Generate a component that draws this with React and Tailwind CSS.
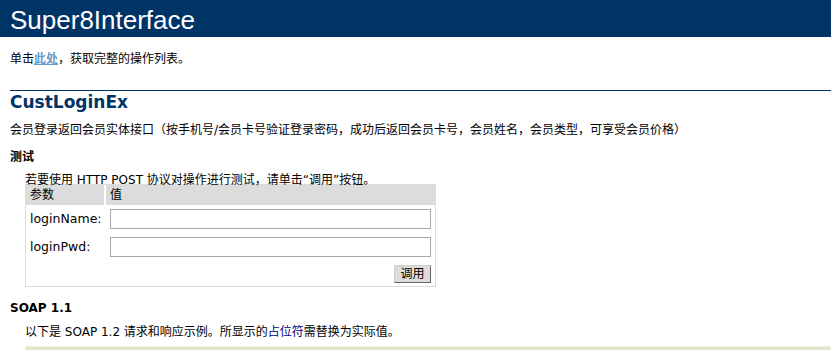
export default function App() {
  return (
    <div className="min-h-screen bg-white text-black text-[12px] leading-[16px] font-['DejaVu_Sans','Noto_Sans_CJK_SC',sans-serif]">
      {/* heading1 */}
      <div className="h-[37px] bg-[#003366] pl-[10px] pt-[7px] text-[26px] leading-[26px] text-white font-['Liberation_Sans','Noto_Sans_CJK_SC',sans-serif]">
        Super8Interface
      </div>

      <div className="ml-[10px]">
        <p className="mt-[14px]">
          单击
          <a href="#" className="font-bold text-[#6699cc] underline">
            此处
          </a>
          ，获取完整的操作列表。
        </p>

        <h2 className="mt-[23px] border-t border-[#003366] pt-[1px] text-[17px] leading-[20px] font-bold text-[#003366]">
          CustLoginEx
        </h2>
        <p className="mt-[10px]">
          会员登录返回会员实体接口（按手机号/会员卡号验证登录密码，成功后返回会员卡号，会员姓名，会员类型，可享受会员价格）
        </p>

        <h3 className="mt-[11px] font-bold">测试</h3>
        <div className="ml-[15px]">
          <p className="mt-[7px]">若要使用 HTTP POST 协议对操作进行测试，请单击“调用”按钮。</p>

          {/* test form */}
          <form className="-mt-[4px] w-[411px] border border-[#dcdcdc]" onSubmit={(e) => e.preventDefault()}>
            <div className="flex h-[20px] bg-[#dcdcdc] leading-[20px]">
              <div className="w-[80px] border-r-2 border-white pl-[4px]">参数</div>
              <div className="flex-1 pl-[4px]">值</div>
            </div>
            <div className="flex h-[28px] items-center">
              <div className="w-[80px] pl-[4px] text-[12.5px]">loginName:</div>
              <div className="flex-1 px-[4px]">
                <input type="text" className="block h-[20px] w-full border border-[#a9a9a9] bg-white px-[2px] text-[12px] outline-none" />
              </div>
            </div>
            <div className="flex h-[28px] items-center">
              <div className="w-[80px] pl-[4px] text-[12.5px]">loginPwd:</div>
              <div className="flex-1 px-[4px]">
                <input type="password" className="block h-[20px] w-full border border-[#a9a9a9] bg-white px-[2px] text-[12px] outline-none" />
              </div>
            </div>
            <div className="flex h-[25px] justify-end pt-[4px] pr-[4px]">
              <button
                type="submit"
                className="flex h-[18px] w-[37px] items-center justify-center border-t border-l border-[#cccccc] border-b border-r border-b-[#666666] border-r-[#666666] bg-[#dcdcdc] text-[12px] leading-[16px]"
              >
                调用
              </button>
            </div>
          </form>
        </div>

        <h3 className="mt-[13px] font-bold">SOAP 1.1</h3>
        <p className="ml-[15px] mt-[8px]">
          以下是 SOAP 1.2 请求和响应示例。所显示的<span className="text-[#00008b]">占位符</span>需替换为实际值。
        </p>
        {/* sample request block (its text lies below the fold) */}
        <div className="ml-[15px] mt-[6px] h-[40px] border border-[#f0f0e0] bg-[#e5e5cc]" />
      </div>
    </div>
  );
}
